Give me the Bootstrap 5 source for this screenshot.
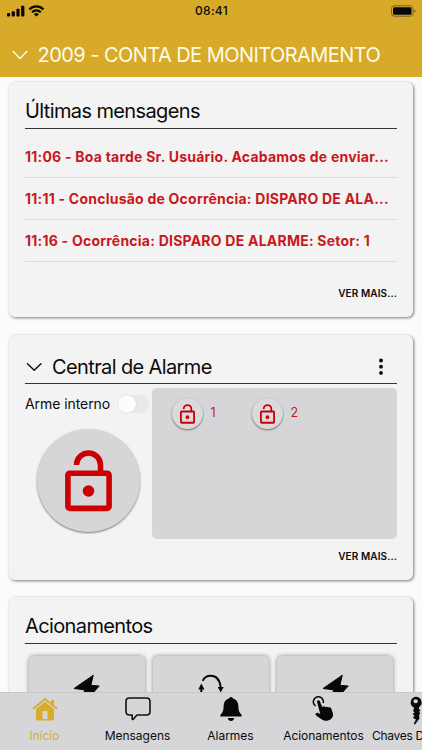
<!DOCTYPE html>
<html lang="pt-BR">
<head>
<meta charset="utf-8">
<meta name="viewport" content="width=device-width, initial-scale=1">
<title>Central de Alarme</title>
<link href="https://cdn.jsdelivr.net/npm/bootstrap@5.3.0/dist/css/bootstrap.min.css" rel="stylesheet">
<style>
  html, body { height: 100%; overflow: hidden; }
  body { font-family: Inter, "Liberation Sans", sans-serif; background: #fbfbfb; color: #0b0b0b; }
  svg { display: block; flex: none; }
  .app-head { background: #d7aa29; height: 77px; }
  .status-row { height: 21px; padding: 0 6px 0 7px; font-size: 12px; font-weight: 500; letter-spacing: .3px; color: #0b0b0b; }
  .status-row > * { flex: 1 1 0; }
  .account-row { height: 56px; padding: 22px 0 0 12px; color: #fffbe6; }
  .account-name { font-size: 20px; font-weight: 400; line-height: 24px; letter-spacing: -.55px; margin-left: 9.500px; white-space: nowrap; }
  .page-body { height: 615px; padding: 5px 9px 0; overflow: hidden; }
  .panel { background: #f3f3f3; border-radius: 6px; padding: 0 16px; box-shadow: 1px 1px 3px rgba(0,0,0,.5); flex: none; }
  .panel-messages { height: 235px; margin-bottom: 18px; }
  .panel-alarm { height: 245px; margin-bottom: 17px; }
  .panel-actions { height: 180px; }
  .panel-head { height: 47px; border-bottom: 1px solid #333; padding-top: 17px; }
  .panel-alarm .panel-head { height: 49px; }
  .panel-head h2 { font-size: 20px; font-weight: 400; line-height: 24px; margin: 0; letter-spacing: -.62px; }
  .panel-alarm h2 { padding-left: 9px; }
  .msg { height: 42px; line-height: 41px; border-bottom: 1px solid #dadada; color: #c9171e; font-size: 14px; font-weight: 700; letter-spacing: .23px; white-space: nowrap; }
  .msgs { padding-top: 7px; }
  .more { font-size: 10px; font-weight: 600; line-height: 14px; letter-spacing: .1px; }
  .arm-side { width: 127px; }
  .arm-label { font-size: 14px; line-height: 20px; letter-spacing: -.07px; white-space: nowrap; }
  .arm-line { padding-top: 10px; }
  .toggle { width: 31px; height: 18px; border-radius: 9px; background: #e9e9e9; margin-left: 8px; flex: none; }
  .toggle-knob { width: 18px; height: 18px; border-radius: 50%; background: #fcfcfc; box-shadow: 0 0 2px rgba(0,0,0,.12); }
  .arm-btn { width: 103px; height: 103px; margin: 15px 0 0 12px; background: #d6d6d8; box-shadow: 0 1px 2px rgba(0,0,0,.5); }
  .zones { background: #d6d6d8; height: 151px; border-radius: 5px; margin-top: 4px; padding: 10px 0 0 20px; }
  .zone { width: 80px; height: 31px; color: #c9171e; font-size: 12.5px; }
  .zone-btn { width: 31px; height: 31px; background: #dadadc; box-shadow: 0 1px 2px rgba(0,0,0,.5); margin-right: 7.500px; }
  .panel-alarm .more { padding-top: 10px; }
  .tiles { padding: 12px 4px 0; gap: 8px; }
  .tile { height: 110px; background: #d6d6d8; border-radius: 5px; box-shadow: 0 0 4px rgba(0,0,0,.45); padding-top: 18px; }
  .tabs-bar { height: 58px; background: #d6d6d8; border-top: 1px solid #c6c6c8; overflow: hidden; }
  .tab { width: 93px; flex: none; font-size: 12px; line-height: 16px; letter-spacing: -.03px; }
  .tab-first { margin-left: -2px; }
  .tab-icon { height: 35px; padding-top: 3px; }
  .tab-on { color: #d9ac2c; }
  .tab-keys { width: 50px; letter-spacing: -.3px; margin-left: 2px; }
  .tab-keys .tab-icon { padding-left: 36px; }
</style>
<script src="https://cdn.jsdelivr.net/npm/bootstrap@5.3.0/dist/js/bootstrap.bundle.min.js"></script>
</head>
<body>
<svg width="0" height="0" class="position-absolute">
  <symbol id="lock-open" viewBox="0 0 47 62">
    <path d="M11.500 15A12 12 0 0 1 35.500 15V23" fill="none" stroke="#cb0003" stroke-width="5.500"/>
    <rect x="2.900" y="23.200" width="41.200" height="35.200" rx="2" fill="none" stroke="#cb0003" stroke-width="5.600"/>
    <circle cx="23.500" cy="41" r="5.800" fill="#cb0003"/>
  </symbol>
  <symbol id="bolt" viewBox="0 0 27 35">
    <path d="M20.300 1.200 1 14.500 11.500 15.800 9 31 26.200 12 17.800 11.300Z" fill="#080808" stroke="#080808" stroke-linejoin="round"/>
  </symbol>
</svg>
<header class="app-head">
  <div class="status-row d-flex align-items-center">
    <div class="d-flex align-items-center">
      <svg width="38" height="14" viewBox="0 0 38 14" fill="#080808">
        <rect x="0" y="9" width="3.200" height="3.500" rx=".9"/><rect x="4.700" y="7.300" width="3.200" height="5.200" rx=".9"/><rect x="9.400" y="4.700" width="3.200" height="7.800" rx=".9"/><rect x="14.100" y="1.800" width="3.300" height="10.700" rx=".9"/>
        <g fill="none" stroke="#080808" stroke-width="2.100"><path d="M22.400 5.400a9.700 9.700 0 0 1 14 0"/><path d="M25 8.200a6.200 6.200 0 0 1 8.800 0"/></g><path d="M29.400 12.600 26.900 10.200a3.600 3.600 0 0 1 5 0Z"/>
      </svg>
    </div>
    <div class="text-center">08:41</div>
    <div class="d-flex justify-content-end">
      <svg width="25" height="12" viewBox="0 0 25 12"><rect x=".5" y=".8" width="21.500" height="10.400" rx="2.800" fill="none" stroke="#77622a"/><rect x="2" y="2.300" width="18.500" height="7.400" rx="1.500" fill="#080808"/><path d="M23.300 4.200q1.400.5 1.400 1.800t-1.400 1.800Z" fill="#77622a"/></svg>
    </div>
  </div>
  <div class="account-row d-flex">
    <svg width="16" height="24" viewBox="0 0 16 24" fill="none" stroke="#fffbe6" stroke-width="1.500" stroke-linecap="round" stroke-linejoin="round"><path d="M1.300 8.500 8 15.500 14.700 8.500"/></svg>
    <span class="account-name">2009 - CONTA DE MONITORAMENTO</span>
  </div>
</header>
<main class="page-body d-flex flex-column">
  <section class="panel panel-messages">
    <div class="panel-head"><h2>Últimas mensagens</h2></div>
    <div class="msgs">
      <div class="msg">11:06 - Boa tarde Sr. Usuário. Acabamos de enviar...</div>
      <div class="msg">11:11 - Conclusão de Ocorrência: DISPARO DE ALA...</div>
      <div class="msg">11:16 - Ocorrência: DISPARO DE ALARME: Setor: 1</div>
    </div>
    <div class="more text-end mt-4">VER MAIS...</div>
  </section>
  <section class="panel panel-alarm">
    <div class="panel-head pt-0 d-flex align-items-center">
      <svg class="mt-3" width="18" height="24" viewBox="0 0 18 24" fill="none" stroke="#111" stroke-width="1.500" stroke-linecap="round" stroke-linejoin="round"><path d="M2.500 8.800 9.200 15.300 16 8.800"/></svg>
      <h2 class="mt-3 flex-grow-1">Central de Alarme</h2>
      <svg class="mt-3 me-2" width="16" height="20" viewBox="0 0 16 20" fill="#080808"><circle cx="8" cy="3.500" r="1.900"/><circle cx="8" cy="9.700" r="1.900"/><circle cx="8" cy="15.900" r="1.900"/></svg>
    </div>
    <div class="d-flex">
      <div class="arm-side">
        <div class="arm-line d-flex align-items-center"><span class="arm-label">Arme interno</span><span class="toggle"><span class="toggle-knob d-block"></span></span></div>
        <div class="arm-btn rounded-circle d-flex align-items-center justify-content-center"><svg width="47" height="62"><use href="#lock-open"/></svg></div>
      </div>
      <div class="zones flex-grow-1 d-flex">
        <div class="zone d-flex align-items-center"><span class="zone-btn rounded-circle d-flex align-items-center justify-content-center"><svg width="15" height="20"><use href="#lock-open"/></svg></span>1</div>
        <div class="zone d-flex align-items-center"><span class="zone-btn rounded-circle d-flex align-items-center justify-content-center"><svg width="15" height="20"><use href="#lock-open"/></svg></span>2</div>
      </div>
    </div>
    <div class="more text-end">VER MAIS...</div>
  </section>
  <section class="panel panel-actions">
    <div class="panel-head"><h2>Acionamentos</h2></div>
    <div class="tiles d-flex">
      <div class="tile flex-fill d-flex justify-content-center"><svg width="27" height="35"><use href="#bolt"/></svg></div>
      <div class="tile flex-fill d-flex justify-content-center"><svg width="28" height="35" viewBox="0 0 28 35"><path d="M5.700 6.800Q8 1.800 13.700 1.800 22.500 1.800 23.700 13.500M4.300 14v5" fill="none" stroke="#080808" stroke-width="2"/><path d="M1.300 15.500 4.300 9.500 7.500 15.500ZM20.700 12.900h6l-3 5.500Z" fill="#080808"/></svg></div>
      <div class="tile flex-fill d-flex justify-content-center"><svg width="27" height="35"><use href="#bolt"/></svg></div>
    </div>
  </section>
</main>
<nav class="tabs-bar d-flex">
  <div class="tab tab-first tab-on text-center">
    <div class="tab-icon d-flex justify-content-center"><svg width="26" height="25" viewBox="0 0 26 25"><path d="M1.500 12.500 13 3l11.500 9.500" fill="none" stroke="#d9ac2c" stroke-width="1.800" stroke-linecap="round" stroke-linejoin="round"/><path d="M19 4h3v6l-3-2.500Z" fill="#d9ac2c"/><path fill-rule="evenodd" d="M4 13 13 5.700 22 13V23q0 1.500-1.500 1.500h-15Q4 24.500 4 23ZM10.500 15v8h5v-8Z" fill="#d9ac2c"/></svg></div>
    Início
  </div>
  <div class="tab text-center">
    <div class="tab-icon d-flex justify-content-center"><svg width="26" height="26" viewBox="0 0 26 26"><path d="M4.500 2h17Q25 2 25 5.500v10q0 3.500-3.500 3.500H12l-4 4.500q-.8.200-.8-.7V19H4.500Q1 19 1 15.500v-10Q1 2 4.500 2Z" fill="none" stroke="#101010" stroke-width="1.600" stroke-linejoin="round"/></svg></div>
    Mensagens
  </div>
  <div class="tab text-center">
    <div class="tab-icon d-flex justify-content-center"><svg width="24" height="26" viewBox="0 0 24 26" fill="#080808"><path d="M12 1q1.800 0 2 1.600c4 1 5.300 4.300 5.400 8.400.1 4 1 5.500 2.900 7.500 1 1.200.6 2-.6 2H2.300c-1.200 0-1.600-.8-.6-2 1.900-2 2.800-3.500 2.900-7.500.1-4.100 1.400-7.400 5.400-8.400Q10.200 1 12 1Z"/><path d="M8.800 22h6.400Q14.700 25 12 25t-3.200-3Z"/></svg></div>
    Alarmes
  </div>
  <div class="tab text-center">
    <div class="tab-icon d-flex justify-content-center"><svg width="24" height="26" viewBox="0 0 24 26"><path d="M3 9.500A5 5 0 1 1 11.300 6.500" fill="none" stroke="#080808" stroke-width="1.600" stroke-linecap="round"/><path d="M5.100 6.200c-.4-1.900 2.200-2.700 2.900-.8l2.300 5.800c.8-1.200 2.400-1.100 3 .1.900-1 2.400-.8 3 .3 1.100-.7 2.400-.3 2.900.9l1.700 4.500c.7 2.900-.5 5.500-2.900 6.700l-2.700 1c-2 .5-4.100-.2-6.200-1.600l-5-3.700c-1.400-1.400.2-3 1.800-2.500l2.400 1.100Z" fill="#080808"/></svg></div>
    Acionamentos
  </div>
  <div class="tab tab-keys text-nowrap">
    <div class="tab-icon d-flex"><svg width="16" height="30" viewBox="0 0 16 30"><path fill-rule="evenodd" d="M7.500.8a6.300 5.800 0 0 1 3.500 10.500v2l1.500 1-1.500 1.700 1.500 1.300L11 19l.5 3.500-4.700 6.300-1-1.200L8 23.500l-3-1.500 1.500-2.500-2-1.500 2-1.500-1.500-1.800 1-2V11.500A6.300 5.800 0 0 1 7.500.8ZM7.600 3.200a2.200 2 0 1 0 .1 0Z" fill="#080808"/></svg></div>
    Chaves D
  </div>
</nav>
</body>
</html>
